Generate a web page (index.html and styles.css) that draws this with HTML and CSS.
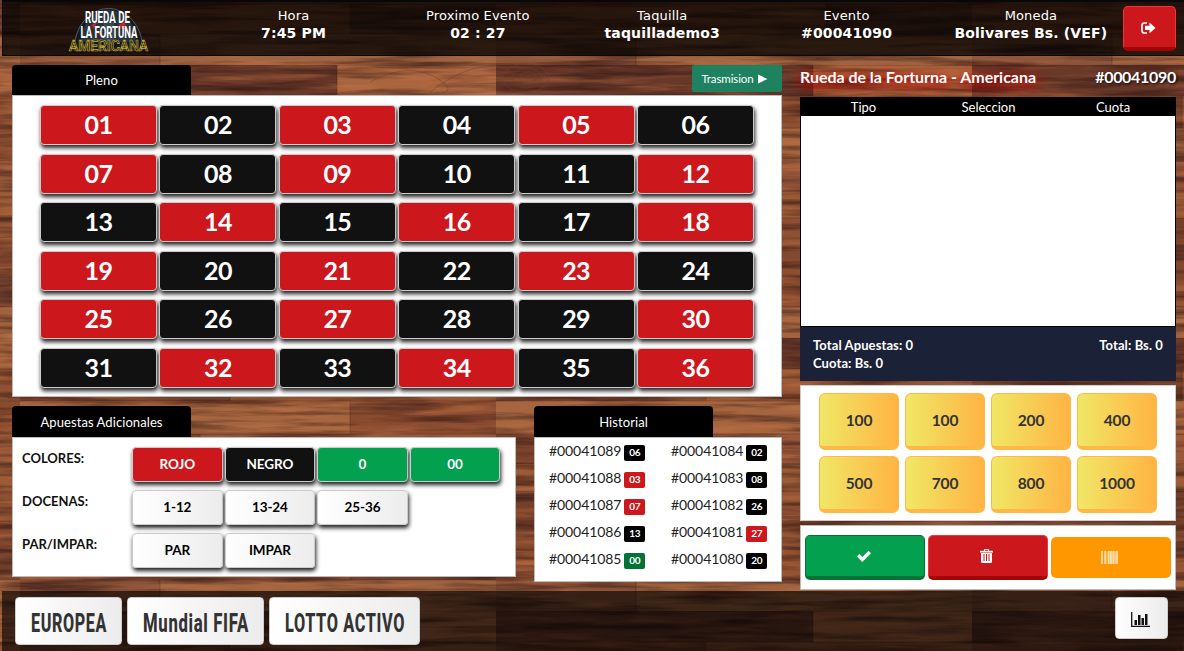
FILE: index.html
```html
<!DOCTYPE html>
<html lang="es">
<head>
<meta charset="utf-8">
<title>Rueda de la Fortuna - Americana</title>
<link rel="stylesheet" href="styles.css">
</head>
<body>
<svg class="wood" width="1184" height="651" aria-hidden="true">
  <defs>
    <filter id="grain" x="0" y="0" width="100%" height="100%" color-interpolation-filters="sRGB">
      <feTurbulence type="fractalNoise" baseFrequency="0.009 0.13" numOctaves="4" seed="8"/>
      <feColorMatrix values="0 0 0 0 0.13  0 0 0 0 0.05  0 0 0 0 0.05  2.6 0 0 0 -1.1"/>
    </filter>
    <filter id="shine" x="0" y="0" width="100%" height="100%" color-interpolation-filters="sRGB">
      <feTurbulence type="fractalNoise" baseFrequency="0.012 0.12" numOctaves="4" seed="31"/>
      <feColorMatrix values="0 0 0 0 0.80  0 0 0 0 0.47  0 0 0 0 0.28  0 2.4 0 0 -1.1"/>
    </filter>
    <pattern id="planks" width="476" height="273" patternUnits="userSpaceOnUse" patternTransform="translate(20 65)">
      <rect width="476" height="273" fill="#8a4d31"/>
      <rect width="317" height="31" fill="#683829"/><rect x="317" width="159" height="31" fill="#a9653f"/>
      <rect y="31" width="210" height="32" fill="#754029"/><rect x="210" y="31" width="266" height="32" fill="#8f5132"/>
      <rect y="63" width="330" height="33" fill="#a5653f"/><rect x="330" y="63" width="146" height="33" fill="#8a4c30"/>
      <rect y="96" width="180" height="30" fill="#7b432d"/><rect x="180" y="96" width="296" height="30" fill="#99583a"/>
      <rect y="126" width="476" height="27" fill="#9b5b37"/>
      <rect y="153" width="260" height="30" fill="#74402b"/><rect x="260" y="153" width="216" height="30" fill="#8d5033"/>
      <rect y="183" width="476" height="29" fill="#83492f"/>
      <rect y="212" width="330" height="30" fill="#945333"/><rect x="330" y="212" width="146" height="30" fill="#70402d"/>
      <rect y="242" width="140" height="31" fill="#8e5439"/><rect x="140" y="242" width="336" height="31" fill="#a0633f"/>
      <path d="M0 0H476M0 31H476M0 63H476M0 96H476M0 126H476M0 153H476M0 183H476M0 212H476M0 242H476M317 0V31M210 31V63M330 63V96M180 96V126M260 153V183M330 212V242M140 242V273" stroke="#3b1d17" stroke-opacity=".35" fill="none"/>
    </pattern>
  </defs>
  <rect width="1184" height="651" fill="url(#planks)"/>
  <rect width="1184" height="651" filter="url(#shine)" opacity=".45"/>
  <rect width="1184" height="651" filter="url(#grain)" opacity=".55"/>
  <g fill="none" stroke="#74402d" stroke-opacity=".5">
    <ellipse cx="526" cy="78" rx="23" ry="14"/><ellipse cx="527" cy="78" rx="15" ry="10"/><ellipse cx="528" cy="78" rx="8" ry="6"/>
    <path d="M370 82q40-22 70-2t-50 12M430 92q45-35 80-22"/>
  </g>
</svg>

<div class="page">
<header class="topbar">
  <div class="stat">
    <svg class="logo" width="80" height="50" viewBox="0 0 80 50">
      <path d="M5 46A34 41 0 1 1 74 46Z" fill="#101b20" stroke="#51585b"/>
      <path d="M12 38A27 32 0 0 1 67 38Z" fill="#26333a"/>
      <path d="M22 21l6-3-3 7zM50 20l7-2-1 8-5-2zM28 29l4-2 0 5z" fill="#c8202a"/>
      <path d="M35 18h10v22h-10z" fill="#344650"/>
      <g font-family="Roboto, sans-serif" font-weight="700" fill="#fff">
        <text x="16" y="19" font-size="16" textLength="45" lengthAdjust="spacingAndGlyphs">RUEDA DE</text>
        <text x="11.500" y="34" font-size="16" textLength="57" lengthAdjust="spacingAndGlyphs">LA FORTUNA</text>
      </g>
      <text x="0" y="47" font-family="Roboto, sans-serif" font-weight="500" font-size="15" textLength="79" lengthAdjust="spacingAndGlyphs" fill="#15130f" stroke="#c9ad35" stroke-width=".7">AMERICANA</text>
    </svg>
  </div>
  <div class="stat"><span>Hora</span><b>7:45 PM</b></div>
  <div class="stat"><span>Proximo Evento</span><b>02 : 27</b></div>
  <div class="stat"><span>Taquilla</span><b>taquillademo3</b></div>
  <div class="stat"><span>Evento</span><b>#00041090</b></div>
  <div class="stat"><span>Moneda</span><b>Bolivares Bs. (VEF)</b></div>
  <button class="logout" aria-label="Salir">
    <svg width="15" height="12" viewBox="0 0 15 12"><path d="M6 1H3.500Q1 1 1 3.500V8.500Q1 11 3.500 11H6" fill="none" stroke="#fff" stroke-width="1.700"/><path d="M4 3.700H8.500V.5L14.500 6 8.500 11.300V8H4Z" fill="#fff"/></svg>
  </button>
</header>

<main class="main">
  <div class="left">
    <section>
      <div class="tabline"><h2 class="tab">Pleno</h2><button class="stream">Trasmision <svg width="10" height="10" viewBox="0 0 10 10"><path d="M0 0.500L9.500 5 0 9.500Z" fill="#fff"/></svg></button></div>
      <div class="board">
        <button class="n r">01</button><button class="n">02</button><button class="n r">03</button><button class="n">04</button><button class="n r">05</button><button class="n">06</button>
        <button class="n r">07</button><button class="n">08</button><button class="n r">09</button><button class="n">10</button><button class="n">11</button><button class="n r">12</button>
        <button class="n">13</button><button class="n r">14</button><button class="n">15</button><button class="n r">16</button><button class="n">17</button><button class="n r">18</button>
        <button class="n r">19</button><button class="n">20</button><button class="n r">21</button><button class="n">22</button><button class="n r">23</button><button class="n">24</button>
        <button class="n r">25</button><button class="n">26</button><button class="n r">27</button><button class="n">28</button><button class="n">29</button><button class="n r">30</button>
        <button class="n">31</button><button class="n r">32</button><button class="n">33</button><button class="n r">34</button><button class="n">35</button><button class="n r">36</button>
      </div>
    </section>
    <div class="lower">
      <section class="extra">
        <h2 class="tab">Apuestas Adicionales</h2>
        <div class="extra-body">
          <div class="bets"><label>COLORES:</label><button class="bet r">ROJO</button><button class="bet k">NEGRO</button><button class="bet g">0</button><button class="bet g">00</button></div>
          <div class="bets"><label>DOCENAS:</label><button class="bet">1-12</button><button class="bet">13-24</button><button class="bet">25-36</button></div>
          <div class="bets"><label>PAR/IMPAR:</label><button class="bet">PAR</button><button class="bet">IMPAR</button></div>
        </div>
      </section>
      <section class="history">
        <h2 class="tab">Historial</h2>
        <div class="history-body">
          <span>#00041089 <i>06</i></span><span>#00041084 <i>02</i></span>
          <span>#00041088 <i class="r">03</i></span><span>#00041083 <i>08</i></span>
          <span>#00041087 <i class="r">07</i></span><span>#00041082 <i>26</i></span>
          <span>#00041086 <i>13</i></span><span>#00041081 <i class="r">27</i></span>
          <span>#00041085 <i class="gr">00</i></span><span>#00041080 <i>20</i></span>
        </div>
      </section>
    </div>
  </div>

  <aside class="right">
    <div class="title"><span class="glow">Rueda de la Forturna - Americana</span><span class="code">#00041090</span></div>
    <div class="ticket"><div class="ticket-head"><span>Tipo</span><span>Seleccion</span><span>Cuota</span></div></div>
    <div class="totals"><div><span>Total Apuestas: 0</span><span>Total: Bs. 0</span></div><div><span>Cuota: Bs. 0</span></div></div>
    <div class="chips"><button>100</button><button>100</button><button>200</button><button>400</button><button>500</button><button>700</button><button>800</button><button>1000</button></div>
    <div class="actions">
      <button class="ok" aria-label="Aceptar"><svg width="16" height="13" viewBox="0 0 16 13"><path d="M1 6.500L3.400 4 6.300 6.900 12.500.8 15 3.200 6.300 11.900Z" fill="#fff"/></svg></button>
      <button class="del" aria-label="Borrar"><svg width="13" height="14" viewBox="0 0 13 14"><path d="M0 1.800H4V.3H9V1.800H13V3.500H0Z" fill="#fff"/><path d="M5 1H8V1.800H5Z" fill="#cc171d"/><path d="M1 4H12V12.500Q12 14 10.500 14H2.500Q1 14 1 12.500Z" fill="#fff"/><path d="M4 5V12M6.500 5V12M9 5V12" stroke="#cc171d"/></svg></button>
      <button class="scan" aria-label="Codigo"><svg width="17" height="13" viewBox="0 0 17 13"><path d="M0 0H17V13H0Z" fill="#ffc266"/><path d="M1 0V13M4.500 0V13M7.500 0V13M10 0V13M12.500 0V13M16 0V13" stroke="#ffe3b8" stroke-width="1.400"/><path d="M2.500 0V13M6 0V13" stroke="#ff9800"/></svg></button>
    </div>
  </aside>
</main>

<footer class="bottombar">
  <button class="game"><svg width="76" height="30"><text x="0" y="24.500" textLength="76" lengthAdjust="spacingAndGlyphs">EUROPEA</text></svg></button>
  <button class="game"><svg width="106" height="30"><text x="0" y="24.500" textLength="106" lengthAdjust="spacingAndGlyphs">Mundial FIFA</text></svg></button>
  <button class="game"><svg width="120" height="30"><text x="0" y="24.500" textLength="120" lengthAdjust="spacingAndGlyphs">LOTTO ACTIVO</text></svg></button>
  <button class="chart" aria-label="Reportes"><svg width="19" height="15" viewBox="0 0 19 15"><path d="M.7 0V14.300H19" fill="none" stroke="#111" stroke-width="1.300"/><path d="M3.500 8h2.500v5H3.500zM7 3h2.500v10H7zM10.500 6h2.500v7h-2.500zM14 2h2.500v11H14z" fill="#111"/></svg></button>
</footer>
</div>
</body>
</html>
```
FILE: styles.css
```css
* { box-sizing: border-box; }
html { background: #7b452d; }
html, body { margin: 0; width: 1184px; height: 651px; overflow: hidden; }
body { font-family: Lato, sans-serif; font-size: 13px; }
button { font: inherit; padding: 0; margin: 0; border: 0; color: inherit; display: flex; align-items: center; justify-content: center; }
svg { display: block; flex: none; overflow: visible; }
.wood { position: absolute; left: 0; top: 0; z-index: -1; }
.page { display: flex; flex-direction: column; height: 651px; }

.topbar { height: 56px; margin-left: 2px; padding: 3px 8px 0 14px; display: flex; background: rgba(0,0,0,.75); border: 1px solid #0c0806; border-top: 2px solid #080808; border-right: 0; color: #fff; font-family: "DejaVu Sans", sans-serif; font-size: 13px; flex: none; }
.stat { width: 184.600px; text-align: center; line-height: 17px; padding-top: 2px; }
.stat span, .stat b { display: block; }
.stat span { letter-spacing: .15px; }
.stat b { font-size: 14px; line-height: 18px; letter-spacing: .15px; }
.logo { margin: -3px auto 0; }
.logout { width: 53px; height: 45px; margin: 1px 0 0 auto; border: 1px solid #f0353a; border-bottom: 4px solid #a30506; border-radius: 5px; background: #cc171d; padding: 2px 3px 0 0; }

.main { display: grid; grid-template-columns: 770px 376px; column-gap: 18px; padding: 9px 0 0 12px; height: 535px; flex: none; }
.tab { width: 179px; height: 30px; margin: 0; border-radius: 4px 4px 0 0; background: #000; color: #fff; font-size: 13px; font-weight: 400; line-height: 30px; text-align: center; letter-spacing: .08px; }
.tabline { display: flex; justify-content: space-between; }
.stream { width: 90px; height: 27px; gap: 4px; padding-right: 5px; background: #1e8160; color: #fff; font-size: 11.500px; letter-spacing: -.1px; border-radius: 2px; }
.board { height: 302px; padding: 9px 27px; border: 1px solid #bbb; background: #fff; display: grid; grid-template-columns: repeat(6, 117px); grid-auto-rows: 40px; column-gap: 2.400px; row-gap: 8.600px; }
.n { background: #111; color: #fff; border: 1px solid #ccc; border-radius: 4px; box-shadow: 1px 3px 4px #222; font-size: 25px; font-weight: 700; padding-bottom: 2px; letter-spacing: -.6px; }
.r { background: #cc171d !important; color: #fff !important; }
.k { background: #111 !important; color: #fff !important; }
.g { background: #03a04f !important; color: #fff !important; }

.lower { display: flex; justify-content: space-between; margin-top: 9px; }
.lower .tab { height: 31px; line-height: 32px; }
.extra-body { width: 504px; height: 140px; border: 1px solid #bbb; background: #fff; padding: 9px 9px 0; }
.bets { display: flex; gap: 2px; height: 43px; }
.bets label { width: 108px; font-weight: 700; font-size: 13px; line-height: 22px; color: #111; }
.bet { width: 90.600px; height: 35px; border: 1px solid #ccc; border-radius: 4px; background: linear-gradient(90deg, #fff, #ececec); color: #000; font-weight: 700; font-size: 13.500px; letter-spacing: -.1px; padding-bottom: 2px; box-shadow: 1px 3px 4px #222; }
.history-body { width: 248px; height: 145px; border: 1px solid #bbb; background: #fff; display: grid; grid-template-columns: 122px 122px; grid-auto-rows: 27px; padding-left: 14px; color: #222; font-size: 14px; }
.history-body span { line-height: 25px; display: flex; gap: 3px; white-space: nowrap; letter-spacing: -.08px; }
.history-body i { width: 21px; height: 16px; margin-top: 7px; border-radius: 2px; background: #000; color: #fff; font: 700 10px/15px Lato, sans-serif; text-align: center; }
.history-body .gr { background: #047237; }

.title { height: 32px; display: flex; justify-content: space-between; align-items: center; padding-bottom: 10px; color: #fff; font-size: 16px; font-weight: 700; letter-spacing: -.03px; white-space: nowrap; }
.glow { text-shadow: 1px 2px 8px #c00, 1px 3px 14px #c00; }
.code { text-shadow: 1px 1px 3px #000; letter-spacing: -.3px; }
.ticket { height: 230px; border: 1px solid #000; background: #fff; }
.ticket-head { height: 18px; background: #000; color: #fff; display: grid; grid-template-columns: 125px 125px 1fr; text-align: center; line-height: 19px; }
.totals { height: 54px; background: #1b2136; color: #fff; font-weight: 700; font-size: 13px; line-height: 18px; padding: 9px 13px; letter-spacing: .1px; }
.totals div { display: flex; justify-content: space-between; }
.chips { height: 136px; margin-top: 4px; border: 1px solid #ccc; background: #fff; padding: 7px 18px; display: grid; grid-template-columns: repeat(4, 80px); grid-auto-rows: 57px; gap: 6px; }
.chips button { border: 1px solid #ffb847; border-bottom-width: 4px; border-radius: 6px; background: linear-gradient(90deg, #f0e766, #ffb443); color: #333; font-size: 15.500px; font-weight: 700; padding: 0; letter-spacing: -.1px; }
.actions { height: 65px; margin-top: 4px; border: 1px solid #bbb; background: #fff; display: flex; gap: 3px; padding: 9px 4px; }
.actions button { width: 120px; height: 45px; border-radius: 5px; }
.ok { background: #03a04f; border: 1px solid #047237; border-bottom-width: 4px; }
.actions .ok, .actions .del { padding-right: 3px; }
.del { background: #cc171d; border: 1px solid #f0353a; border-bottom: 4px solid #a30506; }
.actions .scan { background: #ff9800; height: 41px; margin-top: 2px; padding-right: 4px; }

.bottombar { height: 60px; margin-left: 2px; background: rgba(0,0,0,.62); padding: 6px 16px 0 13px; display: flex; gap: 5px; flex: none; }
.game { height: 48px; padding: 2px 14.500px 0; border: 1px solid #ccc; border-radius: 4px; background: linear-gradient(90deg, #fff, #ececec); }
.game text { font: 800 25.500px "Roboto", sans-serif; letter-spacing: 1px; fill: #333; }
.chart { width: 53px; height: 42px; margin-left: auto; padding: 3px 3px 0 0; border: 1px solid #ccc; border-radius: 4px; background: linear-gradient(90deg, #fff, #ececec); }
```
